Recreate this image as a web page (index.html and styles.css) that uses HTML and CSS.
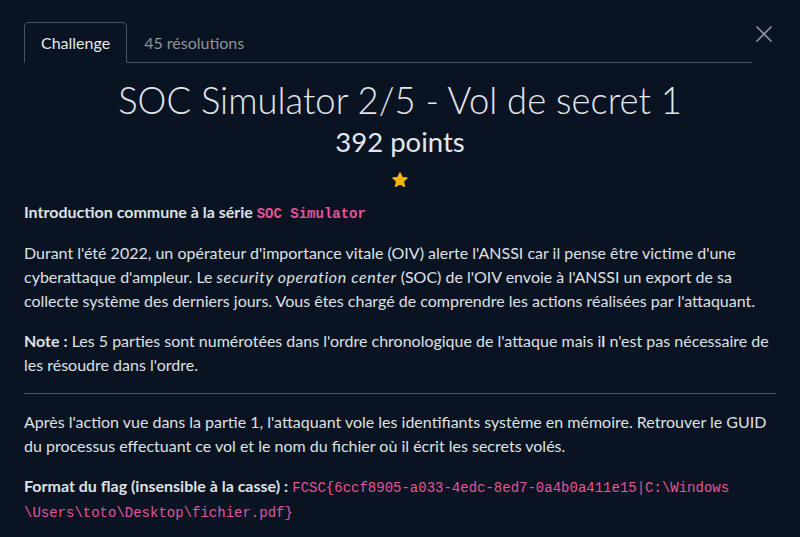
FILE: index.html
```html
<!DOCTYPE html>
<html lang="fr">
<head>
<meta charset="utf-8">
<title>SOC Simulator 2/5</title>
<link rel="stylesheet" href="styles.css">
</head>
<body>
<div class="modal">
  <div class="header">
    <ul class="tabs">
      <li class="tab active">Challenge</li>
      <li class="tab">45 résolutions</li>
    </ul>
    <button class="close" aria-label="Fermer">
      <svg width="18" height="18" viewBox="0 0 18 18"><path d="M1.5 1.5L16.5 16.5M16.5 1.5L1.5 16.5" stroke="#8a929c" stroke-width="1.7" fill="none"/></svg>
    </button>
  </div>
  <h1 class="title">SOC Simulator 2/5 - Vol de secret 1</h1>
  <div class="points">392 points</div>
  <div class="stars">
    <svg width="18" height="18" viewBox="0 0 24 24"><path d="M12 2.2l2.95 6.2 6.8.85-4.98 4.7 1.27 6.75L12 17.4l-6.04 3.3 1.27-6.75L2.25 9.25l6.8-.85z" fill="#f6b60d" stroke="#f6b60d" stroke-width="1.4" stroke-linejoin="round"/></svg>
  </div>
  <div class="desc">
    <p><strong>Introduction commune à la série <code>SOC Simulator</code></strong></p>
    <p>Durant l'été 2022, un opérateur d'importance vitale (OIV) alerte l'ANSSI car il pense être victime d'une cyberattaque d'ampleur. Le <em>security operation center</em> (SOC) de l'OIV envoie à l'ANSSI un export de sa collecte système des derniers jours. Vous êtes chargé de comprendre les actions réalisées par l'attaquant.</p>
    <p><strong>Note :</strong> Les 5 parties sont numérotées dans l'ordre chronologique de l'attaque mais i<strong>l</strong> n'est pas nécessaire de les résoudre dans l'ordre.</p>
    <hr>
    <p>Après l'action vue dans la partie 1, l'attaquant vole les identifiants système en mémoire. Retrouver le GUID du processus effectuant ce vol et le nom du fichier où il écrit les secrets volés.</p>
    <p><strong>Format du flag (insensible à la casse) :</strong> <code>FCSC{6ccf8905-a033-4edc-8ed7-0a4b0a411e15|C:\Windows<wbr>\Users\toto\Desktop\fichier.pdf}</code></p>
  </div>
</div>
</body>
</html>
```

FILE: styles.css
```css
html, body {
  margin: 0;
  padding: 0;
  background: #0a1321;
}
body {
  font-family: Lato, "Open Sans", sans-serif;
  color: #dde1e6;
  font-size: 16px;
  line-height: 1.5;
}
.modal {
  padding: 22px 24px 0 24px;
}
.header {
  display: flex;
  align-items: flex-start;
}
.tabs {
  flex: 1;
  display: flex;
  list-style: none;
  margin: 0;
  padding: 0;
  border-bottom: 1px solid #4b5360;
}
.tab {
  padding: 8px 16px 7px;
  margin-bottom: -1px;
  border: 1px solid transparent;
  border-radius: 5px 5px 0 0;
  color: #8d949c;
  font-size: 16px;
  line-height: 24px;
}
.tab.active {
  color: #e4e8ec;
  border-color: #4b5360 #4b5360 #0a1321;
  background: #0a1321;
}
.close {
  width: 24px;
  height: 24px;
  padding: 0;
  margin-top: 0;
  background: none;
  border: 0;
  display: flex;
  align-items: center;
  justify-content: center;
}
.title {
  margin: 16px 0 0;
  text-align: center;
  font-weight: 300;
  font-size: 36.4px;
  line-height: 43px;
  color: #e3e7ec;
}
.points {
  text-align: center;
  font-size: 27.5px;
  font-weight: 400;
  line-height: 34px;
  margin-top: 3px;
  color: #e3e7ec;
}
.stars {
  display: flex;
  justify-content: center;
  margin-top: 12px;
}
.desc {
  margin-top: 11px;
}
.desc p {
  margin: 0 0 16px;
}
.desc strong {
  font-weight: 700;
}
.desc em {
  letter-spacing: 0.6px;
}
code {
  font-family: "Liberation Mono", "DejaVu Sans Mono", monospace;
  font-size: 14px;
  color: #e2559b;
}
hr {
  border: 0;
  border-top: 1px solid #4b5463;
  margin: 16px 0;
}
```
